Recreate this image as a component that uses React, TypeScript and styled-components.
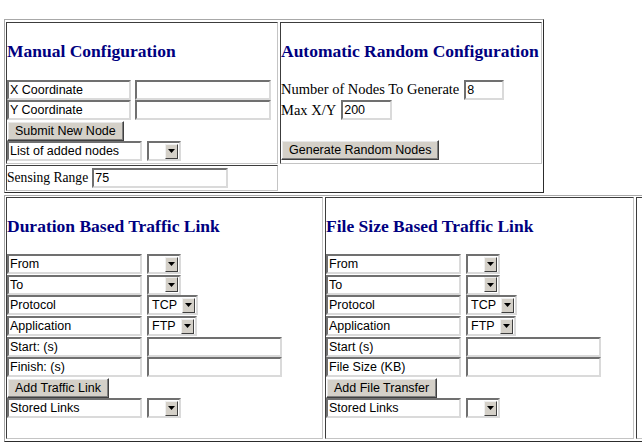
import styled, { createGlobalStyle } from 'styled-components';

const GlobalStyle = createGlobalStyle`
  * { box-sizing: border-box; }
  html, body { margin: 0; padding: 0; background: #fff; overflow: hidden; }
  body {
    font-family: 'Liberation Serif', 'Times New Roman', serif;
    font-size: 14.5px;
    color: #000;
  }
`;

const Page = styled.div`
  display: flex;
  flex-direction: column;
  align-items: flex-start;
  gap: 2px;
  padding: 19px 0 0 4px;
`;

const Panel = styled.div<{ $cols: string; $pad: string }>`
  display: grid;
  grid-template-columns: ${p => p.$cols};
  gap: 1px 2px;
  padding: ${p => p.$pad};
  border: 1px solid;
  border-color: #a8a8a8 #2c2c2c #2c2c2c #a8a8a8;
`;

const Cell = styled.div`
  border: 1px solid;
  border-color: #3c3c3c #c4c4c4 #c4c4c4 #3c3c3c;
  min-width: 0;
  overflow: hidden;
`;

const Heading = styled.h3<{ $after?: number }>`
  margin: 18px 0 ${p => p.$after ?? 18.5}px;
  font: bold 17.5px/20px 'Liberation Serif', 'Times New Roman', serif;
  color: #000080;
  white-space: nowrap;
`;

const Stack = styled.div<{ $bottom?: number }>`
  display: flex;
  flex-direction: column;
  align-items: flex-start;
  gap: 0.6px;
  padding-bottom: ${p => p.$bottom ?? 0}px;
`;

const Row = styled.div<{ $gap: number }>`
  display: flex;
  align-items: center;
  gap: ${p => p.$gap}px;
  height: 20px;
  white-space: nowrap;
`;

const Field = styled.input<{ $w: number }>`
  width: ${p => p.$w}px;
  height: 20px;
  margin: 0;
  padding: 0 1px;
  border: 2px solid;
  border-color: #707070 #dadada #dadada #707070;
  background: #fff;
  font: 12.5px 'Liberation Sans', Arial, sans-serif;
  color: #000;
  outline: none;
`;

const Button = styled.button<{ $top?: number }>`
  height: 20px;
  margin: ${p => p.$top ?? 0}px 0 0;
  padding: 0 7px;
  background: #d4d0c8;
  border: 1px solid;
  border-color: #fff #404040 #404040 #fff;
  box-shadow: inset -1px -1px 0 #808080, inset 1px 1px 0 #e8e8e8;
  font: 12.5px 'Liberation Sans', Arial, sans-serif;
  color: #000;
  white-space: nowrap;
`;

const Select = styled.div<{ $w: number }>`
  display: flex;
  align-items: center;
  width: ${p => p.$w}px;
  height: 20px;
  padding: 0 1px 0 3px;
  border: 2px solid;
  border-color: #707070 #dadada #dadada #707070;
  background: #fff;
  font: 12.5px 'Liberation Sans', Arial, sans-serif;
`;

const SelectValue = styled.span`
  flex: 1;
`;

const Drop = styled.span`
  display: flex;
  align-items: center;
  justify-content: center;
  width: 13px;
  height: 15px;
  background: #d4d0c8;
  border: 1px solid;
  border-color: #f0f0f0 #404040 #404040 #f0f0f0;
`;

const SensingRow = styled.div`
  display: flex;
  align-items: center;
  gap: 4px;
  padding: 2px 0;
  font-size: 13.6px;
  white-space: nowrap;
`;

const Dropdown = ({ w, value }: { w: number; value?: string }) => (
  <Select $w={w}>
    <SelectValue>{value}</SelectValue>
    <Drop>
      <svg width="7" height="4" viewBox="0 0 7 4">
        <path d="M0 0h7L3.5 4z" fill="#000" />
      </svg>
    </Drop>
  </Select>
);

const Label = ({ text, w }: { text: string; w: number }) => (
  <Field $w={w} readOnly value={text} />
);

const TrafficCell = ({ title, second, button }: { title: string; second: [string, string]; button: string }) => (
  <Cell>
    <Heading $after={18}>{title}</Heading>
    <Stack $bottom={20}>
      <Row $gap={5}><Label w={135} text="From" /><Dropdown w={34} /></Row>
      <Row $gap={5}><Label w={135} text="To" /><Dropdown w={34} /></Row>
      <Row $gap={5}><Label w={135} text="Protocol" /><Dropdown w={51} value="TCP" /></Row>
      <Row $gap={5}><Label w={135} text="Application" /><Dropdown w={50} value="FTP" /></Row>
      <Row $gap={5}><Label w={135} text={second[0]} /><Field $w={135} /></Row>
      <Row $gap={5}><Label w={135} text={second[1]} /><Field $w={135} /></Row>
      <Button>{button}</Button>
      <Row $gap={5}><Label w={135} text="Stored Links" /><Dropdown w={34} /></Row>
    </Stack>
  </Cell>
);

export default function App() {
  return (
    <>
      <GlobalStyle />
      <Page>
        <Panel $cols="272px 262px" $pad="2px 1px 1px">
          <Cell>
            <Heading>Manual Configuration</Heading>
            <Stack $bottom={2}>
              <Row $gap={4}><Label w={124} text="X Coordinate" /><Field $w={136} /></Row>
              <Row $gap={4}><Label w={124} text="Y Coordinate" /><Field $w={136} /></Row>
              <Button>Submit New Node</Button>
              <Row $gap={5}><Label w={135} text="List of added nodes" /><Dropdown w={34} /></Row>
            </Stack>
          </Cell>
          <Cell>
            <Heading>Automatic Random Configuration</Heading>
            <Stack>
              <Row $gap={5}>Number of Nodes To Generate <Field $w={40} defaultValue="8" /></Row>
              <Row $gap={5}>Max X/Y <Field $w={51} defaultValue="200" /></Row>
              <Button $top={19}>Generate Random Nodes</Button>
            </Stack>
          </Cell>
          <Cell>
            <SensingRow>
              Sensing Range <Field $w={136} defaultValue="75" />
            </SensingRow>
          </Cell>
        </Panel>
        <Panel $cols="317px 309px 320px" $pad="1px 1px 2px">
          <TrafficCell
            title="Duration Based Traffic Link"
            second={['Start: (s)', 'Finish: (s)']}
            button="Add Traffic Link"
          />
          <TrafficCell
            title="File Size Based Traffic Link"
            second={['Start (s)', 'File Size (KB)']}
            button="Add File Transfer"
          />
          <Cell />
        </Panel>
      </Page>
    </>
  );
}
